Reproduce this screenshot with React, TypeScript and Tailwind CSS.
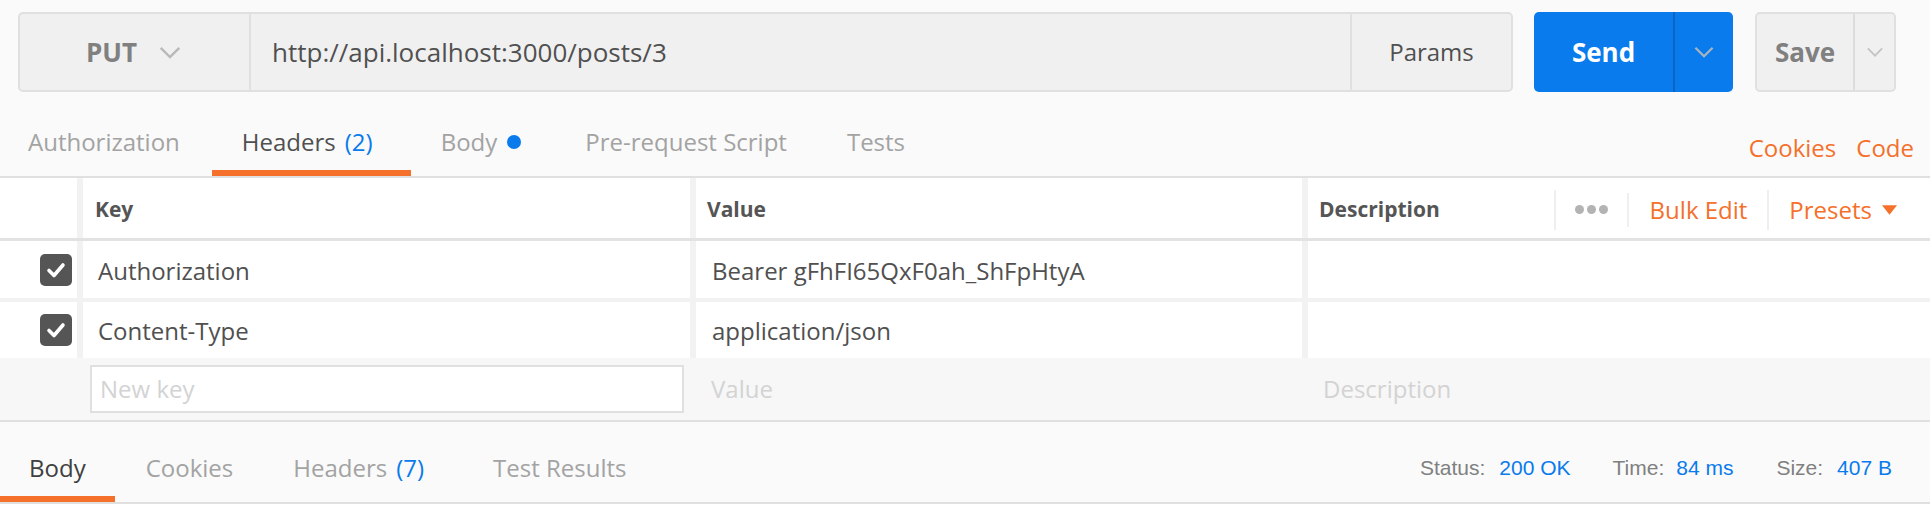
import React from "react";

const Chevron = ({ className }: { className?: string }) => (
  <svg viewBox="0 0 24 14" className={className} fill="none" stroke="currentColor" strokeWidth={2.6}>
    <polyline points="2,2 12,12 22,2" />
  </svg>
);

const Check = () => (
  <svg viewBox="0 0 32 32" className="w-[32px] h-[32px]" fill="none" stroke="white" strokeWidth={3.6} strokeLinecap="round" strokeLinejoin="round">
    <polyline points="9,16.5 14,21.5 23,11" />
  </svg>
);

function UrlRow() {
  return (
    <div className="flex pt-[12px] pl-[18px]">
      <div className="flex h-[80px] w-[1495px] rounded-[5px] border-2 border-[#e0e0e0] bg-[#f0f0f0]">
        <div className="flex w-[231px] items-center border-r-2 border-[#e0e0e0] pl-[66px]">
          <span className="text-[26px] font-bold text-[#808080]">PUT</span>
          <Chevron className="ml-[21px] w-[24px] h-[13px] text-[#b9b9b9]" />
        </div>
        <div className="flex flex-1 items-center pl-[21px] text-[26px] text-[#505050]">
          http://api.localhost:3000/posts/3
        </div>
        <div className="flex w-[161px] items-center justify-center border-l-2 border-[#e0e0e0] text-[24px] text-[#505050]">
          Params
        </div>
      </div>

      {/* send */}
      <div className="ml-[21px] flex h-[80px] w-[199px] overflow-hidden rounded-[5px] bg-[#097bed]">
        <div className="flex w-[139px] items-center justify-center text-[26px] font-bold text-white">Send</div>
        <div className="flex flex-1 items-center justify-center border-l-2 border-[#0a66c2]">
          <Chevron className="w-[22px] h-[12px] text-[#a9b4c0]" />
        </div>
      </div>

      {/* save */}
      <div className="ml-[22px] flex h-[80px] w-[141px] rounded-[5px] border-2 border-[#e0e0e0] bg-[#f0f0f0]">
        <div className="flex w-[96px] items-center justify-center text-[26px] font-bold text-[#808080]">Save</div>
        <div className="flex flex-1 items-center justify-center border-l-2 border-[#dcdcdc]">
          <Chevron className="w-[18px] h-[10px] text-[#c4c4c4]" />
        </div>
      </div>
    </div>
  );
}

function RequestTabs() {
  return (
    <div className="flex h-[86px] border-b-2 border-[#e0e0e0]">
      <div className="flex items-center border-b-[6px] border-transparent pt-[22px] pl-[28px] pr-[32px] text-[24px] text-[#a3a3a3]">
        Authorization
      </div>
      <div className="flex items-center border-b-[6px] border-[#f4702b] pt-[22px] pl-[30px] pr-[38px] text-[24px] text-[#505050]">
        Headers <span className="ml-[9px] text-[#097bed]">(2)</span>
      </div>
      <div className="flex items-center border-b-[6px] border-transparent pt-[22px] pl-[30px] pr-[31px] text-[24px] text-[#a3a3a3]">
        Body <span className="ml-[10px] inline-block h-[14px] w-[14px] rounded-full bg-[#097bed]" />
      </div>
      <div className="flex items-center border-b-[6px] border-transparent pt-[22px] pl-[33px] pr-[30px] text-[24px] text-[#a3a3a3]">
        Pre-request Script
      </div>
      <div className="flex items-center border-b-[6px] border-transparent pt-[22px] pl-[30px] text-[24px] text-[#a3a3a3]">
        Tests
      </div>
      <div className="ml-auto flex items-center gap-[20px] pt-[28px] pr-[16px] text-[24px] text-[#f4702b]">
        <span>Cookies</span>
        <span>Code</span>
      </div>
    </div>
  );
}

function HeadersTable() {
  const rows = [
    { key: "Authorization", value: "Bearer gFhFI65QxF0ah_ShFpHtyA", h: "h-[57px]" },
    { key: "Content-Type", value: "application/json", h: "h-[56px]" },
  ];
  return (
    <div className="bg-[#f2f2f2]">
      {/* header row */}
      <div className="flex h-[63px] gap-[6px] border-b-[3px] border-[#e2e2e2]">
        <div className="w-[77px] bg-white" />
        <div className="flex w-[607px] items-center bg-white pt-[3px] pl-[12px] text-[21px] font-bold text-[#555]">Key</div>
        <div className="flex w-[606px] items-center bg-white pt-[3px] pl-[11px] text-[21px] font-bold text-[#555]">Value</div>
        <div className="flex flex-1 items-center bg-white pt-[3px] pl-[11px]">
          <span className="text-[21px] font-bold text-[#555]">Description</span>
          <div className="ml-auto flex h-full items-center">
            <div className="h-[40px] w-[2px] bg-[#efefef]" />
            <div className="flex w-[71px] items-center justify-center gap-[3px]">
              <span className="h-[9px] w-[9px] rounded-full bg-[#b3b3b3]" />
              <span className="h-[9px] w-[9px] rounded-full bg-[#b3b3b3]" />
              <span className="h-[9px] w-[9px] rounded-full bg-[#b3b3b3]" />
            </div>
            <div className="h-[34px] w-[2px] bg-[#efefef]" />
            <div className="pl-[21px] pr-[20px] text-[24px] text-[#f4702b]">Bulk Edit</div>
            <div className="h-[40px] w-[2px] bg-[#efefef]" />
            <div className="flex items-center pl-[20px] pr-[33px] text-[24px] text-[#f4702b]">
              Presets
              <svg viewBox="0 0 16 10" className="ml-[10px] h-[10px] w-[15px]" fill="#f4702b">
                <polygon points="0,0 16,0 8,10" />
              </svg>
            </div>
          </div>
        </div>
      </div>

      {/* rows */}
      <div className="flex flex-col gap-[4px]">
        {rows.map((r) => (
          <div key={r.key} className={`flex ${r.h} gap-[6px]`}>
            <div className="flex w-[77px] items-center justify-end bg-white pr-[5px]">
              <div className="flex h-[32px] w-[32px] items-center justify-center rounded-[5px] bg-[#555]">
                <Check />
              </div>
            </div>
            <div className="flex w-[607px] items-center bg-white pt-[2px] pl-[15px] text-[24px] text-[#505050]">{r.key}</div>
            <div className="flex w-[606px] items-center bg-white pt-[2px] pl-[16px] text-[24px] text-[#505050]">{r.value}</div>
            <div className="flex-1 bg-white" />
          </div>
        ))}
      </div>

      {/* new row */}
      <div className="flex h-[64px] items-center border-b-2 border-[#e0e0e0] bg-[#f7f7f7] text-[24px] text-[#d3d3d3]">
        <div className="w-[90px]" />
        <div className="flex h-[48px] w-[594px] items-center border-2 border-[#e0e0e0] bg-white pl-[8px]">New key</div>
        <div className="w-[629px] pl-[27px]">Value</div>
        <div className="pl-[10px]">Description</div>
      </div>
    </div>
  );
}

function ResponseBar() {
  return (
    <div className="flex h-[82px] border-b-2 border-[#e0e0e0] bg-[#fafafa]">
      <div className="flex items-center border-b-[6px] border-[#f4702b] pt-[18px] pl-[29px] pr-[29px] text-[24px] text-[#404040]">
        Body
      </div>
      <div className="flex items-center border-b-[6px] border-transparent pt-[18px] pl-[31px] pr-[30px] text-[24px] text-[#a3a3a3]">
        Cookies
      </div>
      <div className="flex items-center border-b-[6px] border-transparent pt-[18px] pl-[30px] pr-[34px] text-[24px] text-[#a3a3a3]">
        Headers <span className="ml-[9px] text-[#097bed]">(7)</span>
      </div>
      <div className="flex items-center border-b-[6px] border-transparent pt-[18px] pl-[35px] text-[24px] text-[#a3a3a3]">
        Test Results
      </div>
      <div className="ml-auto flex items-center pt-[12px] pr-[38px] font-['Liberation_Sans',Arial,sans-serif] text-[21px]">
        <span className="text-[#808080]">Status:</span>
        <span className="ml-[14px] text-[#097bed]">200 OK</span>
        <span className="ml-[42px] text-[#808080]">Time:</span>
        <span className="ml-[12px] text-[#097bed]">84 ms</span>
        <span className="ml-[43px] text-[#808080]">Size:</span>
        <span className="ml-[14px] text-[#097bed]">407 B</span>
      </div>
    </div>
  );
}

export default function App() {
  return (
    <div className="min-h-[518px] w-full bg-white font-['Open_Sans',sans-serif]">
      <div className="bg-[#fafafa]">
        <UrlRow />
        <RequestTabs />
      </div>
      <HeadersTable />
      <ResponseBar />
    </div>
  );
}
